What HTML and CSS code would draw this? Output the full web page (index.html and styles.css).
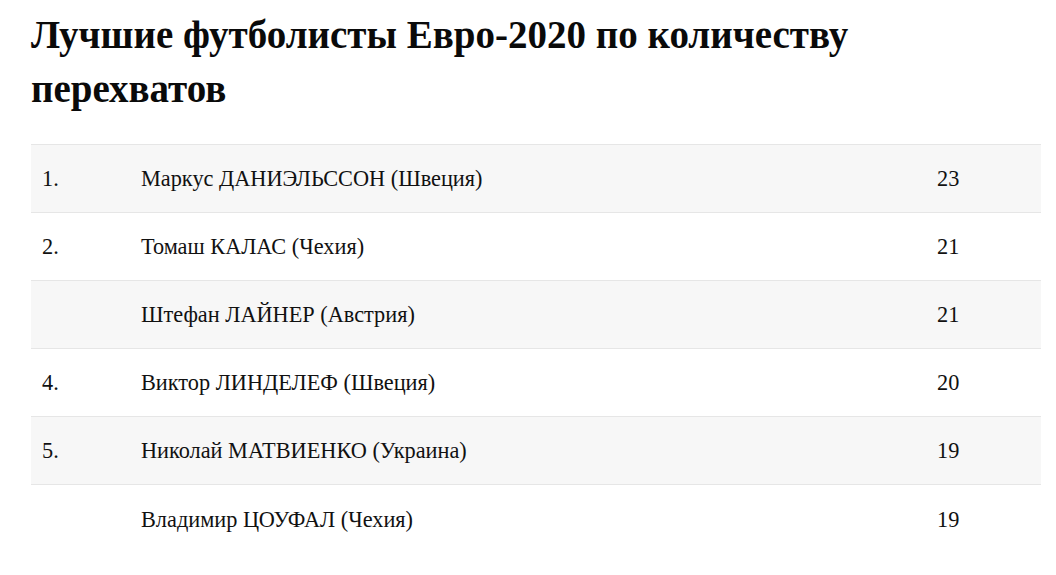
FILE: index.html
```html
<!DOCTYPE html>
<html lang="ru">
<head>
<meta charset="utf-8">
<link rel="stylesheet" href="styles.css">
</head>
<body>
<main class="page">
  <h1 class="title">Лучшие футболисты Евро-2020 по количеству перехватов</h1>
  <div class="table">
    <div class="row odd"><div class="pos">1.</div><div class="name">Маркус ДАНИЭЛЬССОН (Швеция)</div><div class="val">23</div></div>
    <div class="row"><div class="pos">2.</div><div class="name">Томаш КАЛАС (Чехия)</div><div class="val">21</div></div>
    <div class="row odd"><div class="pos"></div><div class="name">Штефан ЛАЙНЕР (Австрия)</div><div class="val">21</div></div>
    <div class="row"><div class="pos">4.</div><div class="name">Виктор ЛИНДЕЛЕФ (Швеция)</div><div class="val">20</div></div>
    <div class="row odd"><div class="pos">5.</div><div class="name">Николай МАТВИЕНКО (Украина)</div><div class="val">19</div></div>
    <div class="row last"><div class="pos"></div><div class="name">Владимир ЦОУФАЛ (Чехия)</div><div class="val">19</div></div>
  </div>
</main>
</body>
</html>
```
FILE: styles.css
```css
html, body {
  margin: 0;
  padding: 0;
  background: #ffffff;
}
.page {
  padding: 8px 15px 0 31px;
  font-family: "Liberation Serif", "Times New Roman", serif;
  color: #111111;
}
.title {
  margin: 0 0 28px 0;
  font-size: 39px;
  line-height: 54px;
  font-weight: bold;
  color: #0a0a0a;
  width: 950px;
}
.table {
  width: 1010px;
  border-top: 1px solid #e6e6e6;
}
.row {
  display: grid;
  grid-template-columns: 99px 1fr 115px;
  align-items: center;
  border-bottom: 1px solid #e6e6e6;
  font-size: 22.3px;
  padding-top: 1px;
  box-sizing: border-box;
  height: 68px;
}
.row.odd {
  background: #f7f7f7;
}
.row.last {
  border-bottom: none;
}
.pos, .name, .val {
  padding: 0 11px;
}
```
